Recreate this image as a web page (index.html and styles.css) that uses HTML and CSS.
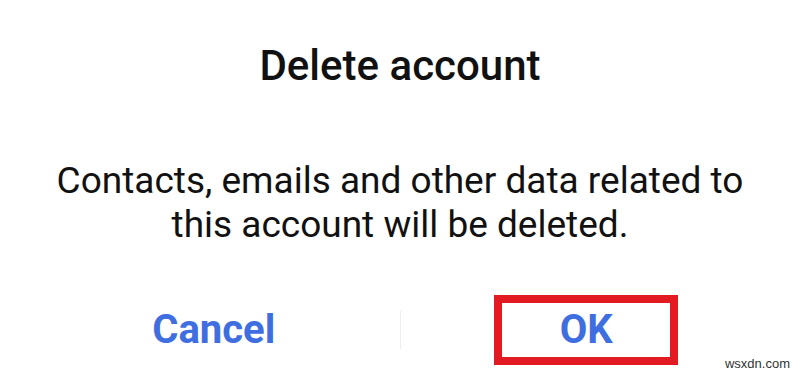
FILE: index.html
```html
<!DOCTYPE html>
<html>
<head>
<meta charset="utf-8">
<link rel="stylesheet" href="styles.css">
</head>
<body>
<div class="dialog">
  <h1 class="title">Delete account</h1>
  <p class="message">Contacts, emails and other data related to this account will be deleted.</p>
  <div class="actions">
    <div class="action"><span class="btn">Cancel</span></div>
    <div class="divider"></div>
    <div class="action"><span class="btn btn-ok">OK</span></div>
  </div>
  <span class="watermark">wsxdn.com</span>
</div>
</body>
</html>
```
FILE: styles.css
```css
html, body {
  margin: 0;
  padding: 0;
  background: #ffffff;
}
.dialog {
  position: relative;
  width: 800px;
  height: 374px;
  display: flex;
  flex-direction: column;
  font-family: Roboto, "Noto Sans", sans-serif;
  color: #111111;
  overflow: hidden;
}
.title {
  margin: 0;
  padding-top: 42px;
  font-size: 42px;
  font-weight: 500;
  line-height: 48px;
  text-align: center;
}
.message {
  margin: 69px 0 0 0;
  padding: 0 50px;
  font-size: 37px;
  font-weight: 400;
  line-height: 44px;
  text-align: center;
}
.actions {
  display: flex;
  align-items: center;
  margin-top: 45px;
  padding: 0 28px;
  height: 76px;
}
.action {
  flex: 1;
  display: flex;
  justify-content: center;
  align-items: center;
}
.divider {
  width: 1px;
  height: 38px;
  background: #eeeeee;
}
.btn {
  display: inline-block;
  font-size: 40px;
  font-weight: 700;
  color: #3f6ee0;
  line-height: 46px;
}
.btn-ok {
  box-sizing: border-box;
  width: 184px;
  height: 70px;
  border: 8px solid #e21b22;
  line-height: 54px;
  text-align: center;
}
.watermark {
  position: absolute;
  right: 10px;
  bottom: 3px;
  font-family: "Liberation Sans", Arial, sans-serif;
  font-size: 13px;
  color: #333333;
}
```
